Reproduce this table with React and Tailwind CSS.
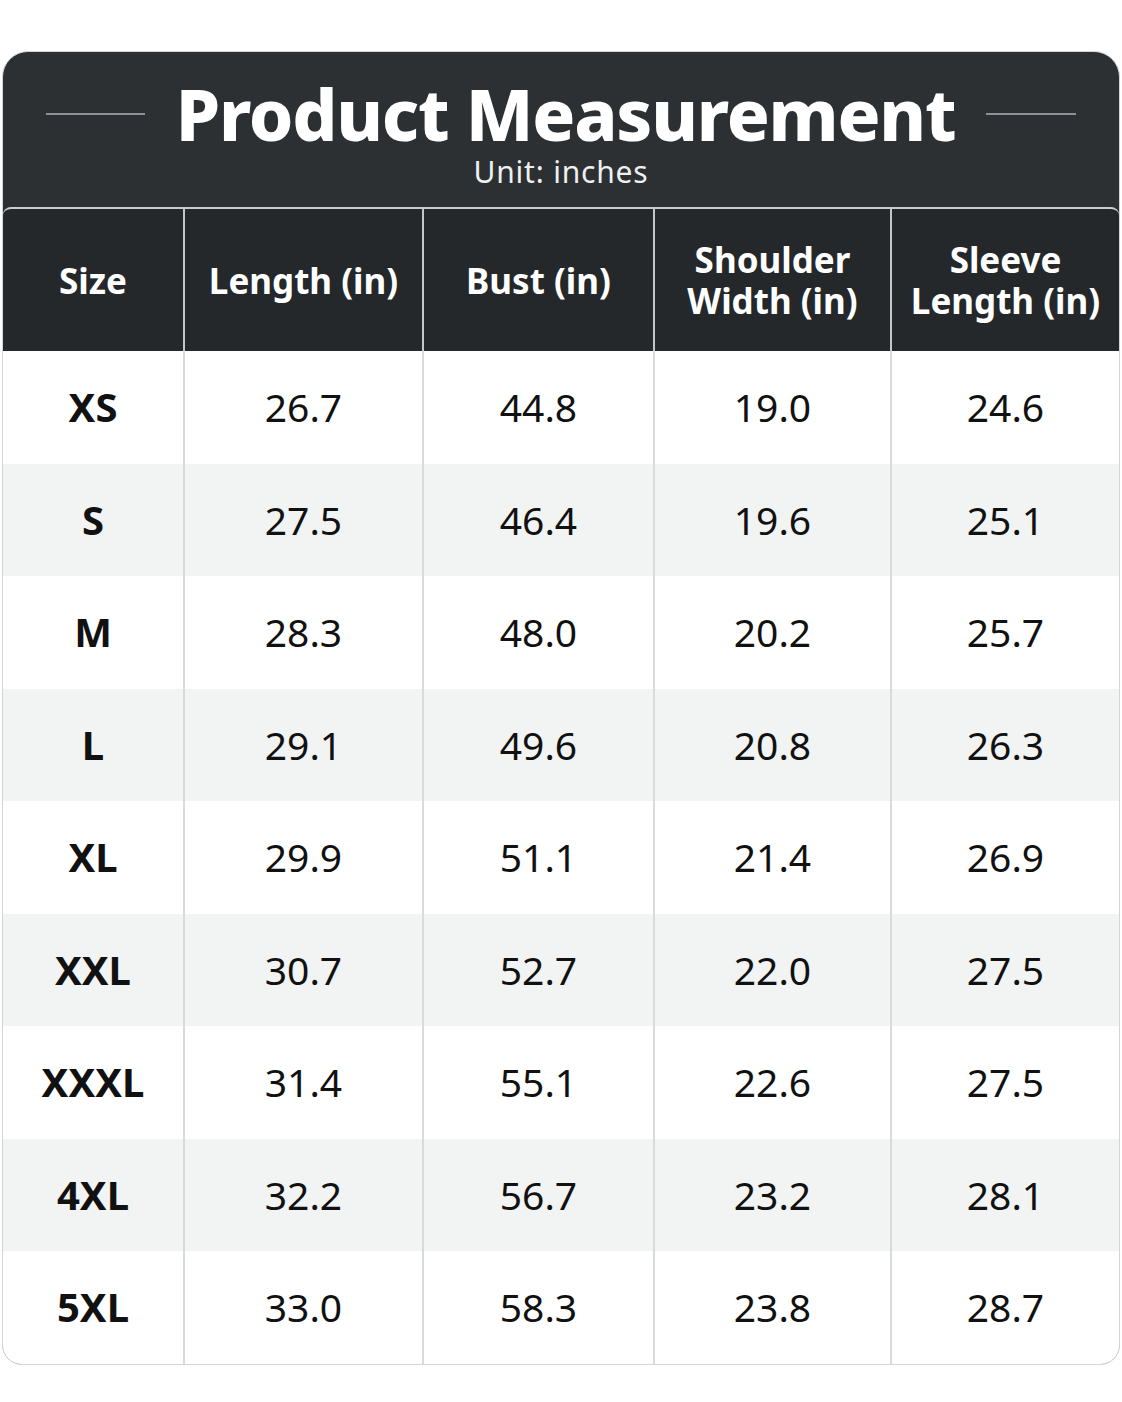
import React from "react";

const rows = [
  ["XS", "26.7", "44.8", "19.0", "24.6"],
  ["S", "27.5", "46.4", "19.6", "25.1"],
  ["M", "28.3", "48.0", "20.2", "25.7"],
  ["L", "29.1", "49.6", "20.8", "26.3"],
  ["XL", "29.9", "51.1", "21.4", "26.9"],
  ["XXL", "30.7", "52.7", "22.0", "27.5"],
  ["XXXL", "31.4", "55.1", "22.6", "27.5"],
  ["4XL", "32.2", "56.7", "23.2", "28.1"],
  ["5XL", "33.0", "58.3", "23.8", "28.7"],
];

const headers = [
  ["Size"],
  ["Length (in)"],
  ["Bust (in)"],
  ["Shoulder", "Width (in)"],
  ["Sleeve", "Length (in)"],
];

export default function App() {
  return (
    <div
      className="w-[1122px] h-[1402px] bg-white pt-[51px] px-[2px]"
      style={{ fontFamily: '"Noto Sans", "Open Sans", sans-serif' }}
    >
      <div className="rounded-t-[26px] rounded-b-[20px] bg-[#2d3033] border border-[#d3d6d9] overflow-hidden">
        {/* Title */}
        <div className="h-[155px] flex flex-col items-center">
          <div className="flex items-center gap-[31px] mt-[24px] h-[76px]">
            <div className="w-[99px] h-[2px] bg-[#8b9196]" />
            <h1 className="text-[71px] leading-[76px] font-extrabold text-white tracking-[-1.2px]">
              Product Measurement
            </h1>
            <div className="w-[90px] h-[2px] bg-[#8b9196]" />
          </div>
          <div className="mt-[2px] text-[30px] leading-[36px] text-[#eef0f1] tracking-[0.8px]">
            Unit: inches
          </div>
        </div>
        {/* Table */}
        <div className="rounded-t-[8px] border-t-2 border-[#c9cdd0] overflow-hidden bg-white">
          <div className="grid grid-cols-[182px_239px_231px_237px_1fr]">
            {headers.map((h, i) => (
              <div
                key={i}
                className={`h-[142px] bg-[#25282b] flex flex-col items-center justify-center text-white font-bold text-[35px] leading-[41px] ${
                  i < 4 ? "border-r-2 border-[#c3c7ca]" : ""
                }`}
              >
                {h.map((line) => (
                  <span key={line}>{line}</span>
                ))}
              </div>
            ))}
            {rows.map((r, ri) =>
              r.map((c, ci) => (
                <div
                  key={ri + "-" + ci}
                  className={`h-[112.5px] flex items-center justify-center text-[#111111] ${
                    ri % 2 === 1 ? "bg-[#f2f3f3]" : "bg-white"
                  } ${ci < 4 ? "border-r-2 border-[#d8dbde]" : ""} ${
                    ci === 0 ? "font-bold text-[40px]" : "text-[39px]"
                  }`}
                >
                  {c}
                </div>
              ))
            )}
          </div>
        </div>
      </div>
    </div>
  );
}
